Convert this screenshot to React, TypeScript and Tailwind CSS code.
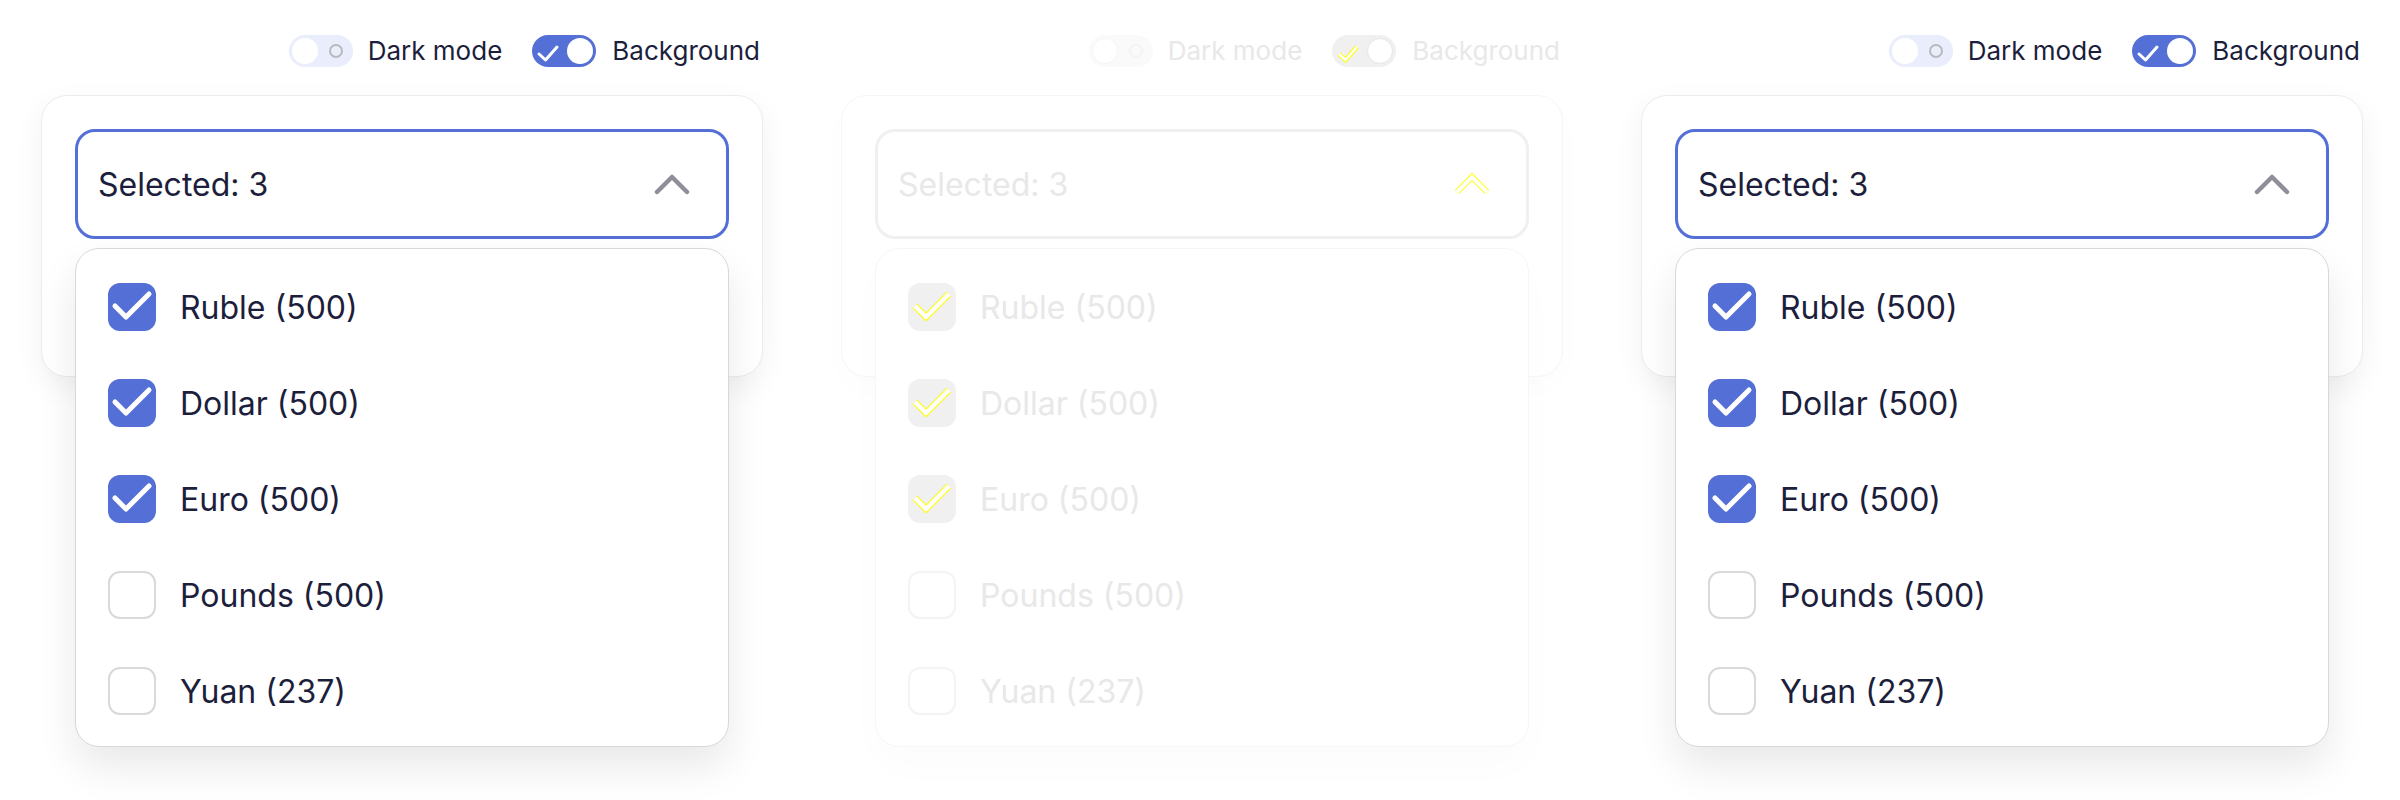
import React from "react";

type Item = { label: string; checked: boolean };

const items: Item[] = [
  { label: "Ruble (500)", checked: true },
  { label: "Dollar (500)", checked: true },
  { label: "Euro (500)", checked: true },
  { label: "Pounds (500)", checked: false },
  { label: "Yuan (237)", checked: false },
];

function OutlinePath({ d, w, ghost, color }: { d: string; w: number; ghost: boolean; color: string }) {
  if (!ghost) {
    return <path d={d} fill="none" stroke={color} strokeWidth={w} strokeLinecap="round" strokeLinejoin="round" />;
  }
  return (
    <>
      <path d={d} fill="none" stroke="#ffff00" strokeWidth={w + 1.4} strokeLinecap="butt" strokeLinejoin="miter" />
      <path d={d} fill="none" stroke="#ffffff" strokeWidth={w - 0.6} strokeLinecap="butt" strokeLinejoin="miter" />
    </>
  );
}

function Chevron({ ghost }: { ghost: boolean }) {
  return (
    <svg width="36" height="24" viewBox="0 0 36 24" className="block">
      <OutlinePath d="M3 20 L18 5 L33 20" w={4.5} ghost={ghost} color="#8e8f99" />
    </svg>
  );
}

function CheckBox({ checked, ghost }: { checked: boolean; ghost: boolean }) {
  if (!checked) {
    return (
      <div
        className={
          ghost
            ? "w-[48px] h-[48px] rounded-[12px] border-2 border-[#f4f4f4] bg-white shrink-0"
            : "w-[48px] h-[48px] rounded-[12px] border-2 border-[#d9d9dc] bg-white shrink-0"
        }
      />
    );
  }
  return (
    <div
      className={
        ghost
          ? "w-[48px] h-[48px] rounded-[12px] bg-[#f0f0f0] shrink-0 flex items-center justify-center"
          : "w-[48px] h-[48px] rounded-[12px] bg-[#5470d6] shrink-0 flex items-center justify-center"
      }
    >
      <svg width="48" height="48" viewBox="0 0 48 48" className="block">
        <OutlinePath d="M7 23 L18 34 L41 11" w={5} ghost={ghost} color="#ffffff" />
      </svg>
    </div>
  );
}

function ToggleOff({ ghost }: { ghost: boolean }) {
  return (
    <div
      className={
        ghost
          ? "relative w-[64px] h-[32px] rounded-full bg-[#fafafa] shrink-0"
          : "relative w-[64px] h-[32px] rounded-full bg-[#eaedfc] shrink-0"
      }
    >
      <div
        className={
          ghost
            ? "absolute left-[3px] top-[3px] w-[26px] h-[26px] rounded-full bg-white border border-[#f6f6f6]"
            : "absolute left-[3px] top-[3px] w-[26px] h-[26px] rounded-full bg-white"
        }
      />
      <div
        className={
          ghost
            ? "absolute left-[40px] top-[9px] w-[14px] h-[14px] rounded-full border-[2.5px] border-[#f4f4f4]"
            : "absolute left-[40px] top-[9px] w-[14px] h-[14px] rounded-full border-[2.5px] border-[#b9b9be]"
        }
      />
    </div>
  );
}

function ToggleOn({ ghost }: { ghost: boolean }) {
  return (
    <div
      className={
        ghost
          ? "relative w-[64px] h-[32px] rounded-full bg-[#f0f0f0] shrink-0"
          : "relative w-[64px] h-[32px] rounded-full bg-[#5470d6] shrink-0"
      }
    >
      <svg width="32" height="32" viewBox="0 0 32 32" className="absolute left-0 top-0">
        <OutlinePath d="M7 19 L13.5 25 L25 12" w={3} ghost={ghost} color="#ffffff" />
      </svg>
      <div
        className={
          ghost
            ? "absolute right-[3px] top-[3px] w-[26px] h-[26px] rounded-full bg-white border border-[#e6e6e6]"
            : "absolute right-[3px] top-[3px] w-[26px] h-[26px] rounded-full bg-white"
        }
      />
    </div>
  );
}

function Panel({ ghost }: { ghost: boolean }) {
  const text = ghost ? "text-[#e8e8e8]" : "text-[#1c1e3c]";
  return (
    <div className="w-[800px] shrink-0 pt-[35px]">
      <div className="flex justify-end items-center pr-[40px] h-[32px]">
        <div className="flex items-center gap-[15px]">
          <ToggleOff ghost={ghost} />
          <span className={`text-[26px] leading-[32px] ${text}`}>Dark mode</span>
        </div>
        <div className="flex items-center gap-[16px] ml-[30px]">
          <ToggleOn ghost={ghost} />
          <span className={`text-[26px] leading-[32px] ${text}`}>Background</span>
        </div>
      </div>

      <div
        className={
          ghost
            ? "relative mt-[28px] ml-[41px] w-[722px] h-[282px] rounded-[26px] border border-[#f6f6f6] bg-white p-[33px] shadow-[0_10px_30px_rgba(0,0,0,0.015)]"
            : "relative mt-[28px] ml-[41px] w-[722px] h-[282px] rounded-[26px] border border-[#ececec] bg-white p-[33px] shadow-[0_10px_30px_rgba(0,0,0,0.06)]"
        }
      >
        <div
          className={
            ghost
              ? "h-[110px] rounded-[20px] border-[3px] border-[#f0f0f0] bg-white flex items-center justify-between pl-[20px] pr-[36px]"
              : "h-[110px] rounded-[20px] border-[3px] border-[#5470d6] bg-white flex items-center justify-between pl-[20px] pr-[36px]"
          }
        >
          <span className={`text-[32px] leading-[40px] pt-[2px] ${text}`}>Selected: 3</span>
          <Chevron ghost={ghost} />
        </div>

        <div
          className={
            ghost
              ? "absolute left-[33px] top-[152px] w-[654px] h-[499px] rounded-[24px] border border-[#f6f6f6] bg-white pt-[10px] pb-[6px] shadow-[0_20px_40px_rgba(0,0,0,0.015)]"
              : "absolute left-[33px] top-[152px] w-[654px] h-[499px] rounded-[24px] border border-[#d8d8d8] bg-white pt-[10px] pb-[6px] shadow-[0_20px_40px_rgba(0,0,0,0.09)]"
          }
        >
          {items.map((it) => (
            <div key={it.label} className="h-[96px] flex items-center pl-[32px] gap-[24px]">
              <CheckBox checked={it.checked} ghost={ghost} />
              <span className={`text-[32px] leading-[40px] pt-[2px] ${text}`}>{it.label}</span>
            </div>
          ))}
        </div>
      </div>
    </div>
  );
}

export default function App() {
  return (
    <div className="flex w-[2400px] h-[800px] overflow-hidden bg-white font-[Inter]">
      <Panel ghost={false} />
      <Panel ghost={true} />
      <Panel ghost={false} />
    </div>
  );
}
